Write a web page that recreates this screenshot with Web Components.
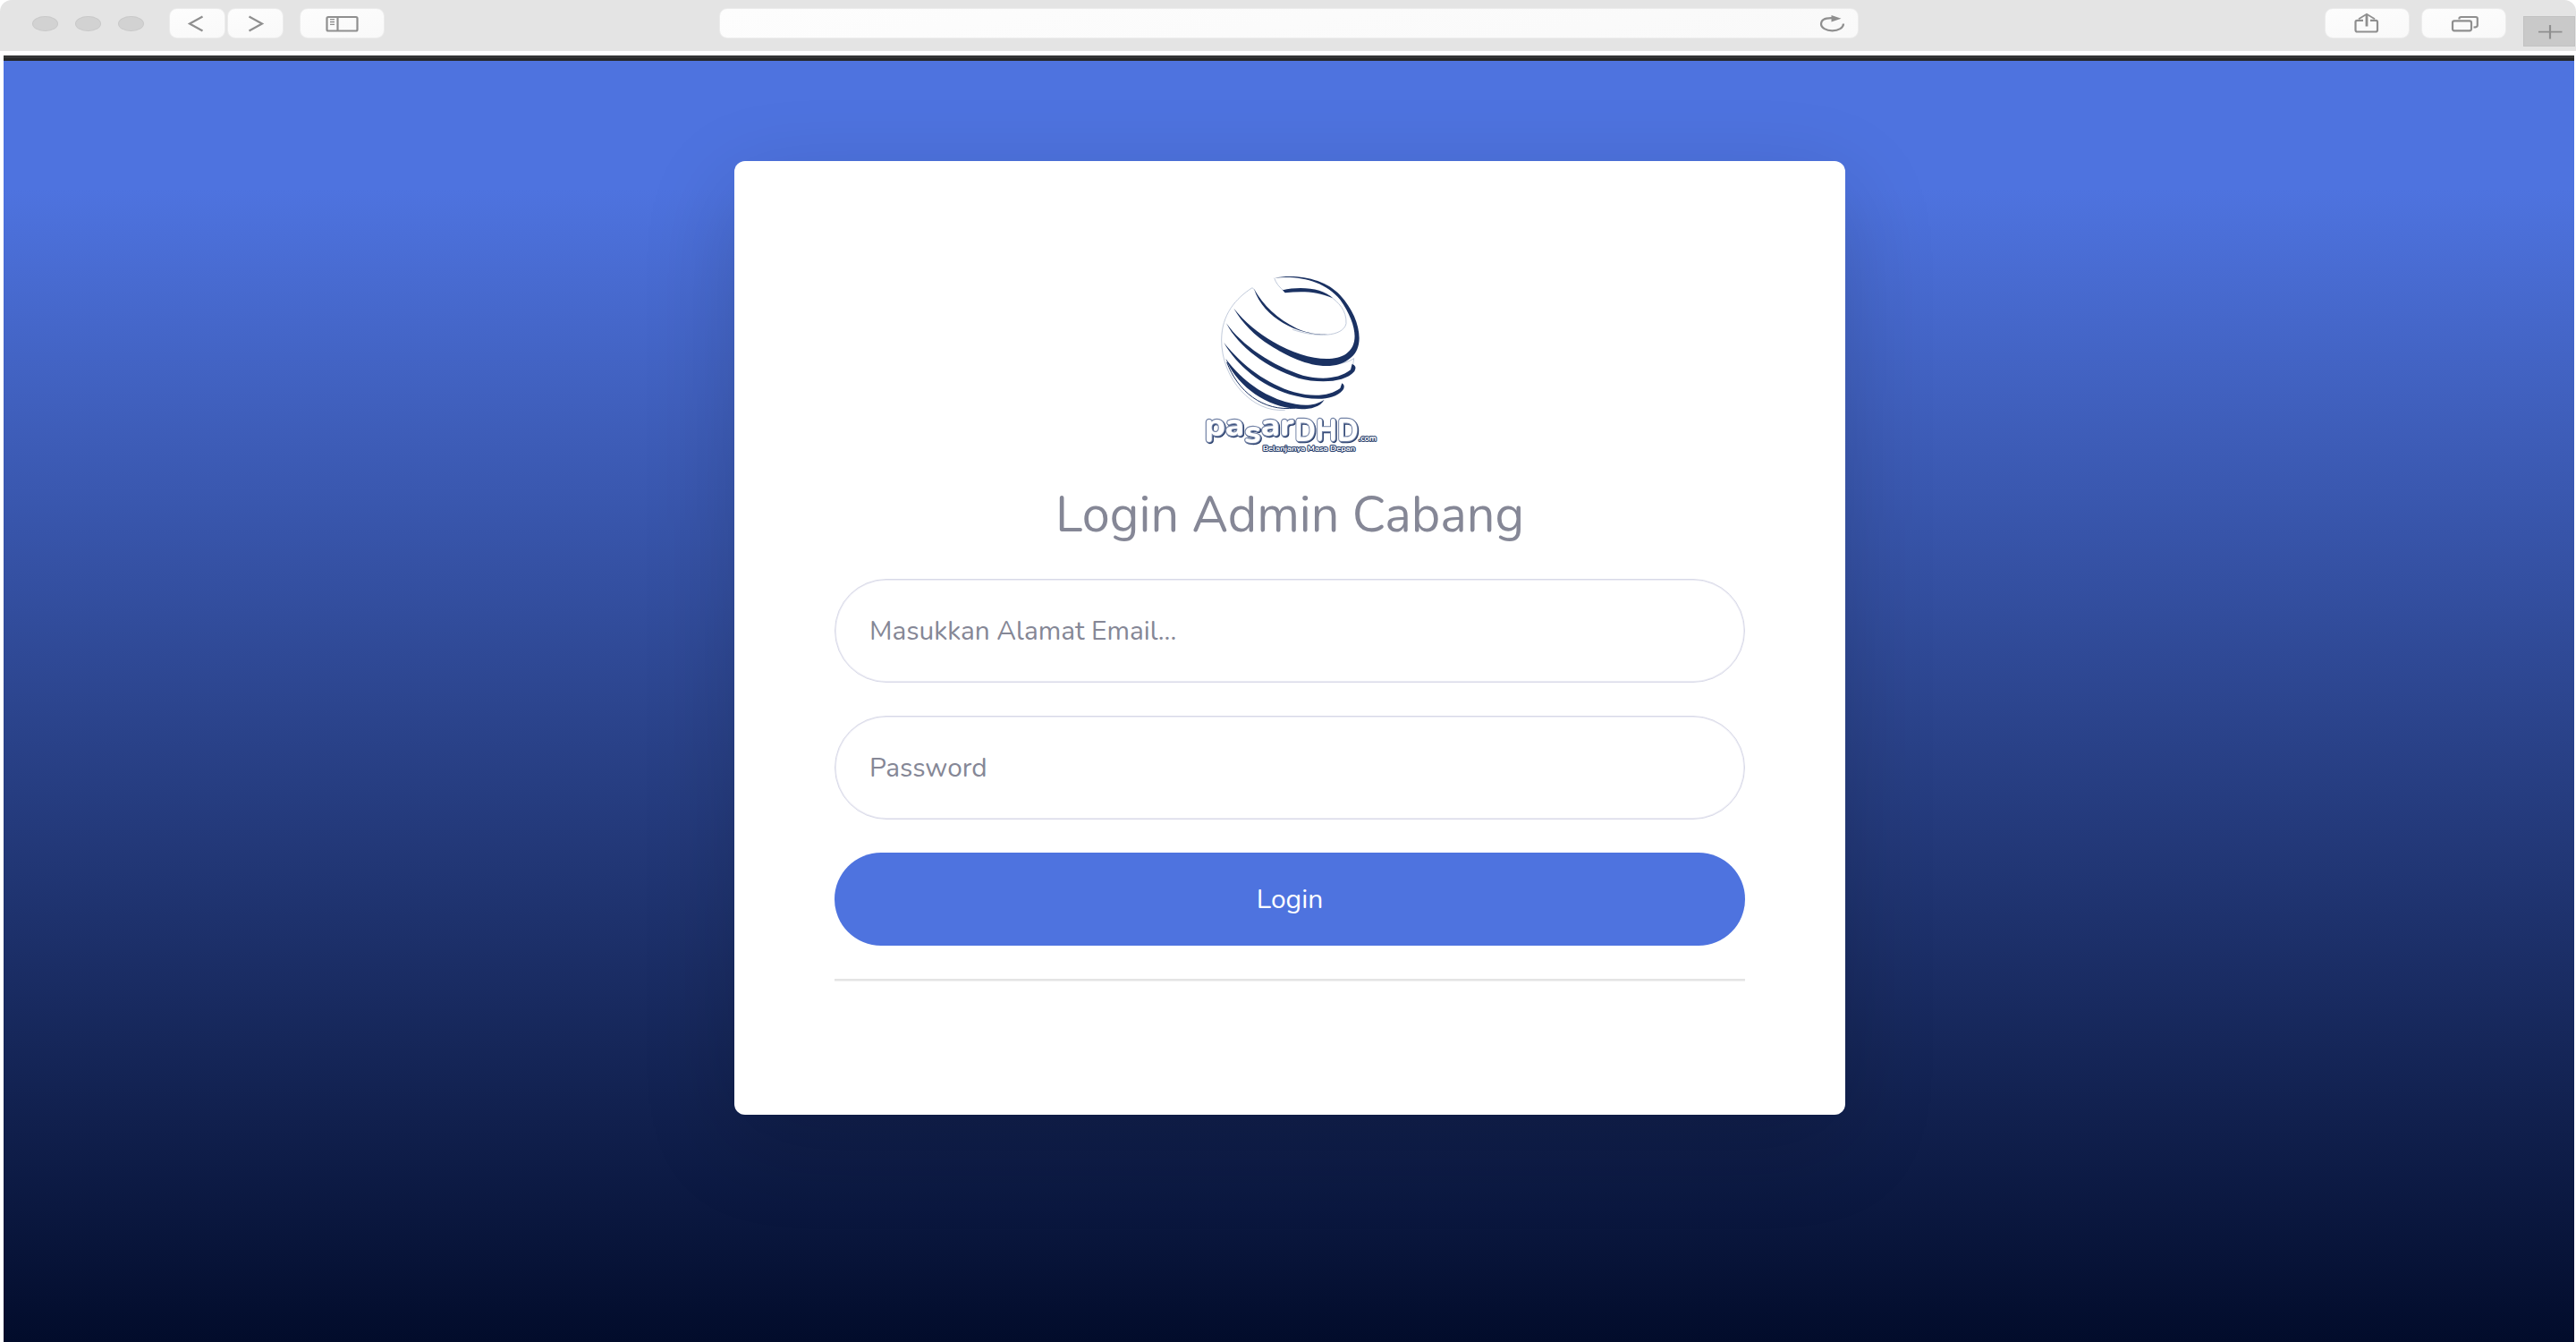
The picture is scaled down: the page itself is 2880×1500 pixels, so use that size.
<!DOCTYPE html>
<html lang="id">
<head>
<meta charset="utf-8">
<title>Login Admin Cabang</title>
<style>
html,body{margin:0;height:100%;background:#fff}
body{font-family:Nunito,Lato,"Noto Sans",sans-serif;overflow:hidden}
</style>
</head>
<body>
<browser-window>
  <login-card>
    <brand-logo slot="logo"></brand-logo>
    <span slot="title">Login Admin Cabang</span>
    <text-field>Masukkan Alamat Email...</text-field>
    <text-field>Password</text-field>
    <pill-button>Login</pill-button>
  </login-card>
</browser-window>
<script>
const define=(name,html)=>customElements.define(name,class extends HTMLElement{
  constructor(){super();this.attachShadow({mode:'open'}).innerHTML=html;}
});

define('tool-button',`<style>
:host{display:flex;box-sizing:border-box;align-items:center;justify-content:center;height:34px;flex:none;
background:linear-gradient(170deg,#fdfdfd,#f9f9f9);border:1px solid #ececec;border-radius:9px;color:#8f8f8f}
</style><slot></slot>`);

define('browser-toolbar',`<style>
:host{display:flex;box-sizing:border-box;height:57px;background:#e4e4e4;border-radius:13px 13px 0 0;padding-top:9px;align-items:flex-start;overflow:hidden}
.dots{display:flex;gap:19px;margin:9px 28px 0 36px;width:125px;flex:none}
.dots i{box-sizing:border-box;width:29px;height:17px;border-radius:50%;background:#d2d2d2;border:1px solid #c9c9c9;flex:none}
svg{display:block;fill:none;stroke:#8f8f8f;stroke-width:2.200}
.plus{display:flex;box-sizing:border-box;width:58px;height:34px;margin:9px 0 0 19px;background:#c9c9c9;border:1px solid #c2c2c2;flex:none}
</style>
<div class="dots"><i></i><i></i><i></i></div>
<tool-button style="width:63px"><svg width="61" height="32"><path d="M36.500 8.500 L22 16.500 L36.500 24.500" /></svg></tool-button>
<tool-button style="width:63px;margin-left:2px"><svg width="61" height="32"><path d="M23.500 8.500 L38 16.500 L23.500 24.500"/></svg></tool-button>
<tool-button style="width:95px;margin-left:18px"><svg width="93" height="32"><rect x="29.500" y="9" width="34" height="15.500" rx="1.500"/><path d="M41.500 9V24"/><path stroke-width="1.300" d="M33 11.700h5M33 14.500h5M33 17.300h5"/></svg></tool-button>
<tool-button style="width:1274px;margin-left:374px;justify-content:flex-end"><svg width="53" height="32"><path d="M26 10.300C14.500 9.600 12 13 12 17C12 21 17.500 24.300 24.500 24.300C31.500 24.300 37 21 37 16.500"/><path d="M23.500 7L34.500 10.800L23.500 14.400Z" fill="#8f8f8f" stroke="none"/></svg></tool-button>
<tool-button style="width:95px;margin-left:521px"><svg width="93" height="32"><path d="M42 12.800H35.500Q33.500 12.800 33.500 14.600V23.500Q33.500 25.500 35.500 25.500H56Q58 25.500 58 23.500V14.600Q58 12.800 56.200 12.800H50"/><path stroke-width="2.800" d="M46 6V19.500"/><path stroke-width="1.800" d="M37 11.200L46 5.800L55 11.200"/></svg></tool-button>
<tool-button style="width:95px;margin-left:13px"><svg width="93" height="32"><rect x="34" y="13.300" width="21" height="11" rx="2"/><path d="M41.500 11.500V10.500Q41.500 9 43.500 9H60Q61.800 9 61.800 10.500V18.500Q61.800 20.500 57.500 20.500"/></svg></tool-button>
<div class="plus"><svg width="56" height="32"><path d="M29 9V24.500"/><path stroke-width="1.600" d="M16 16.600H42.500"/></svg></div>`);

define('browser-window',`<style>
:host{display:flex;flex-direction:column;height:1500px;background:#fff}
browser-toolbar{flex:none}
main{flex:1;display:flex;box-sizing:border-box;margin:5px 2px 0 4px;border-top:3px solid #343536;flex-direction:column}
.strip{height:3px;background:#262728;flex:none}
.page{flex:1;display:flex;justify-content:center;align-items:flex-start;padding:112px 0 0 2px;box-sizing:border-box;overflow:hidden;
background:linear-gradient(180deg,#4e73df 10%,#020c2b 100%)}
</style><browser-toolbar></browser-toolbar><main><div class="strip"></div><div class="page"><slot></slot></div></main>`);

define('login-card',`<style>
:host{display:flex;flex-direction:column;box-sizing:border-box;width:1242px;height:1066px;padding:110px 112px 0;background:#fff;border-radius:12px;box-shadow:0 30px 105px rgba(0,0,0,.165)}
.logo{display:flex;justify-content:center;height:230px}
.logo ::slotted(*){margin-left:-4px}
h1{margin:16px 0 0;height:111px;line-height:80px;text-align:center;font-size:55.700px;font-weight:400;color:#858796;white-space:nowrap}
.fields{display:flex;flex-direction:column;gap:37px}
hr{width:100%;height:2px;box-sizing:content-box;margin:37px 0 0;border:0;background:#e4e4e4;border-bottom:1px solid #efefef}
</style><div class="logo"><slot name="logo"></slot></div><h1><slot name="title"></slot></h1><div class="fields"><slot></slot></div><hr>`);

define('text-field',`<style>
:host{display:flex;align-items:center;box-sizing:border-box;height:116px;border:1px solid #d7d8e7;box-shadow:inset 0 0 0 1px #ededf5;border-radius:58px;padding:1px 38px 0;font-size:29.800px;color:#858796}
</style><slot></slot>`);

define('pill-button',`<style>
:host{display:flex;align-items:center;justify-content:center;box-sizing:border-box;height:104px;padding-top:1px;border-radius:52px;background:#4e73df;color:#fff;font-size:30px}
</style><slot></slot>`);

define('brand-logo',`<style>
:host{display:block;width:240px;height:230px}
svg{display:block}
text{font-family:Nunito,sans-serif;fill:#fff;stroke:#263c6a;paint-order:stroke;stroke-linejoin:round}
.word{stroke:#7383a6;filter:drop-shadow(3px 3px 1px #263c6a)}
</style>
<svg width="240" height="230" viewBox="0 0 720 690">
<g fill="none" stroke="#b4bfd2" stroke-width="2.500">
<path d="M240 95C185 130 137 185 137 270C137 400 240 515 350 505"/>
<path d="M240 95L250 104M350 108Q322 88 314 62"/>
<path d="M375 235C455 263 545 260 555 215C557 170 530 145 500 122"/>
<path d="M510 352Q555 350 581 332L578 353"/>
</g>
<g fill="#1a3162">
<path d="M314 62C390 48 485 65 535 120C600 190 622 290 570 330C500 390 380 340 300 288C250 258 205 211 178 164C215 210 260 246 310 276C400 330 505 350 554 317C602 285 589 213 535 135C485 73 400 53 314 62Z"/>
<path d="M342 103C400 88 480 96 510 130C455 105 400 106 350 112Z"/>
<path d="M246 99C280 157 322 197 390 232C430 249 460 252 495 252C405 257 280 203 246 99Z"/>
<path d="M153 214C205 288 310 358 410 389C470 404 530 402 570 370L575 350Q593 357 583 375C550 415 460 415 395 398C290 365 193 292 153 214Z"/>
<path d="M145 279C210 360 290 417 380 445C450 464 502 456 535 432L541 415Q554 423 544 438C510 478 435 472 365 452C270 424 187 354 145 279Z"/>
<path d="M151 333C210 412 280 455 350 477C405 492 445 494 482 470C462 505 408 504 370 499C270 485 182 412 151 333Z"/>
</g>
<path d="M155 345C190 440 275 512 384 498" fill="none" stroke="#1a3162" stroke-width="3"/>
<text class="word" font-size="108" font-weight="800" stroke-width="7"><tspan x="80" y="590" dy="0 0 24 -24" textLength="300" lengthAdjust="spacingAndGlyphs">pasar</tspan><tspan x="382" y="609" textLength="214" lengthAdjust="spacingAndGlyphs">DHD</tspan></text>
<text x="597" y="608" font-size="27" font-weight="700" stroke-width="6" textLength="60" lengthAdjust="spacingAndGlyphs">.com</text>
<text x="275" y="641" font-size="25" font-weight="700" stroke-width="6" textLength="311" lengthAdjust="spacingAndGlyphs">Belanjanya Masa Depan</text>
</svg>`);
</script>
</body>
</html>
